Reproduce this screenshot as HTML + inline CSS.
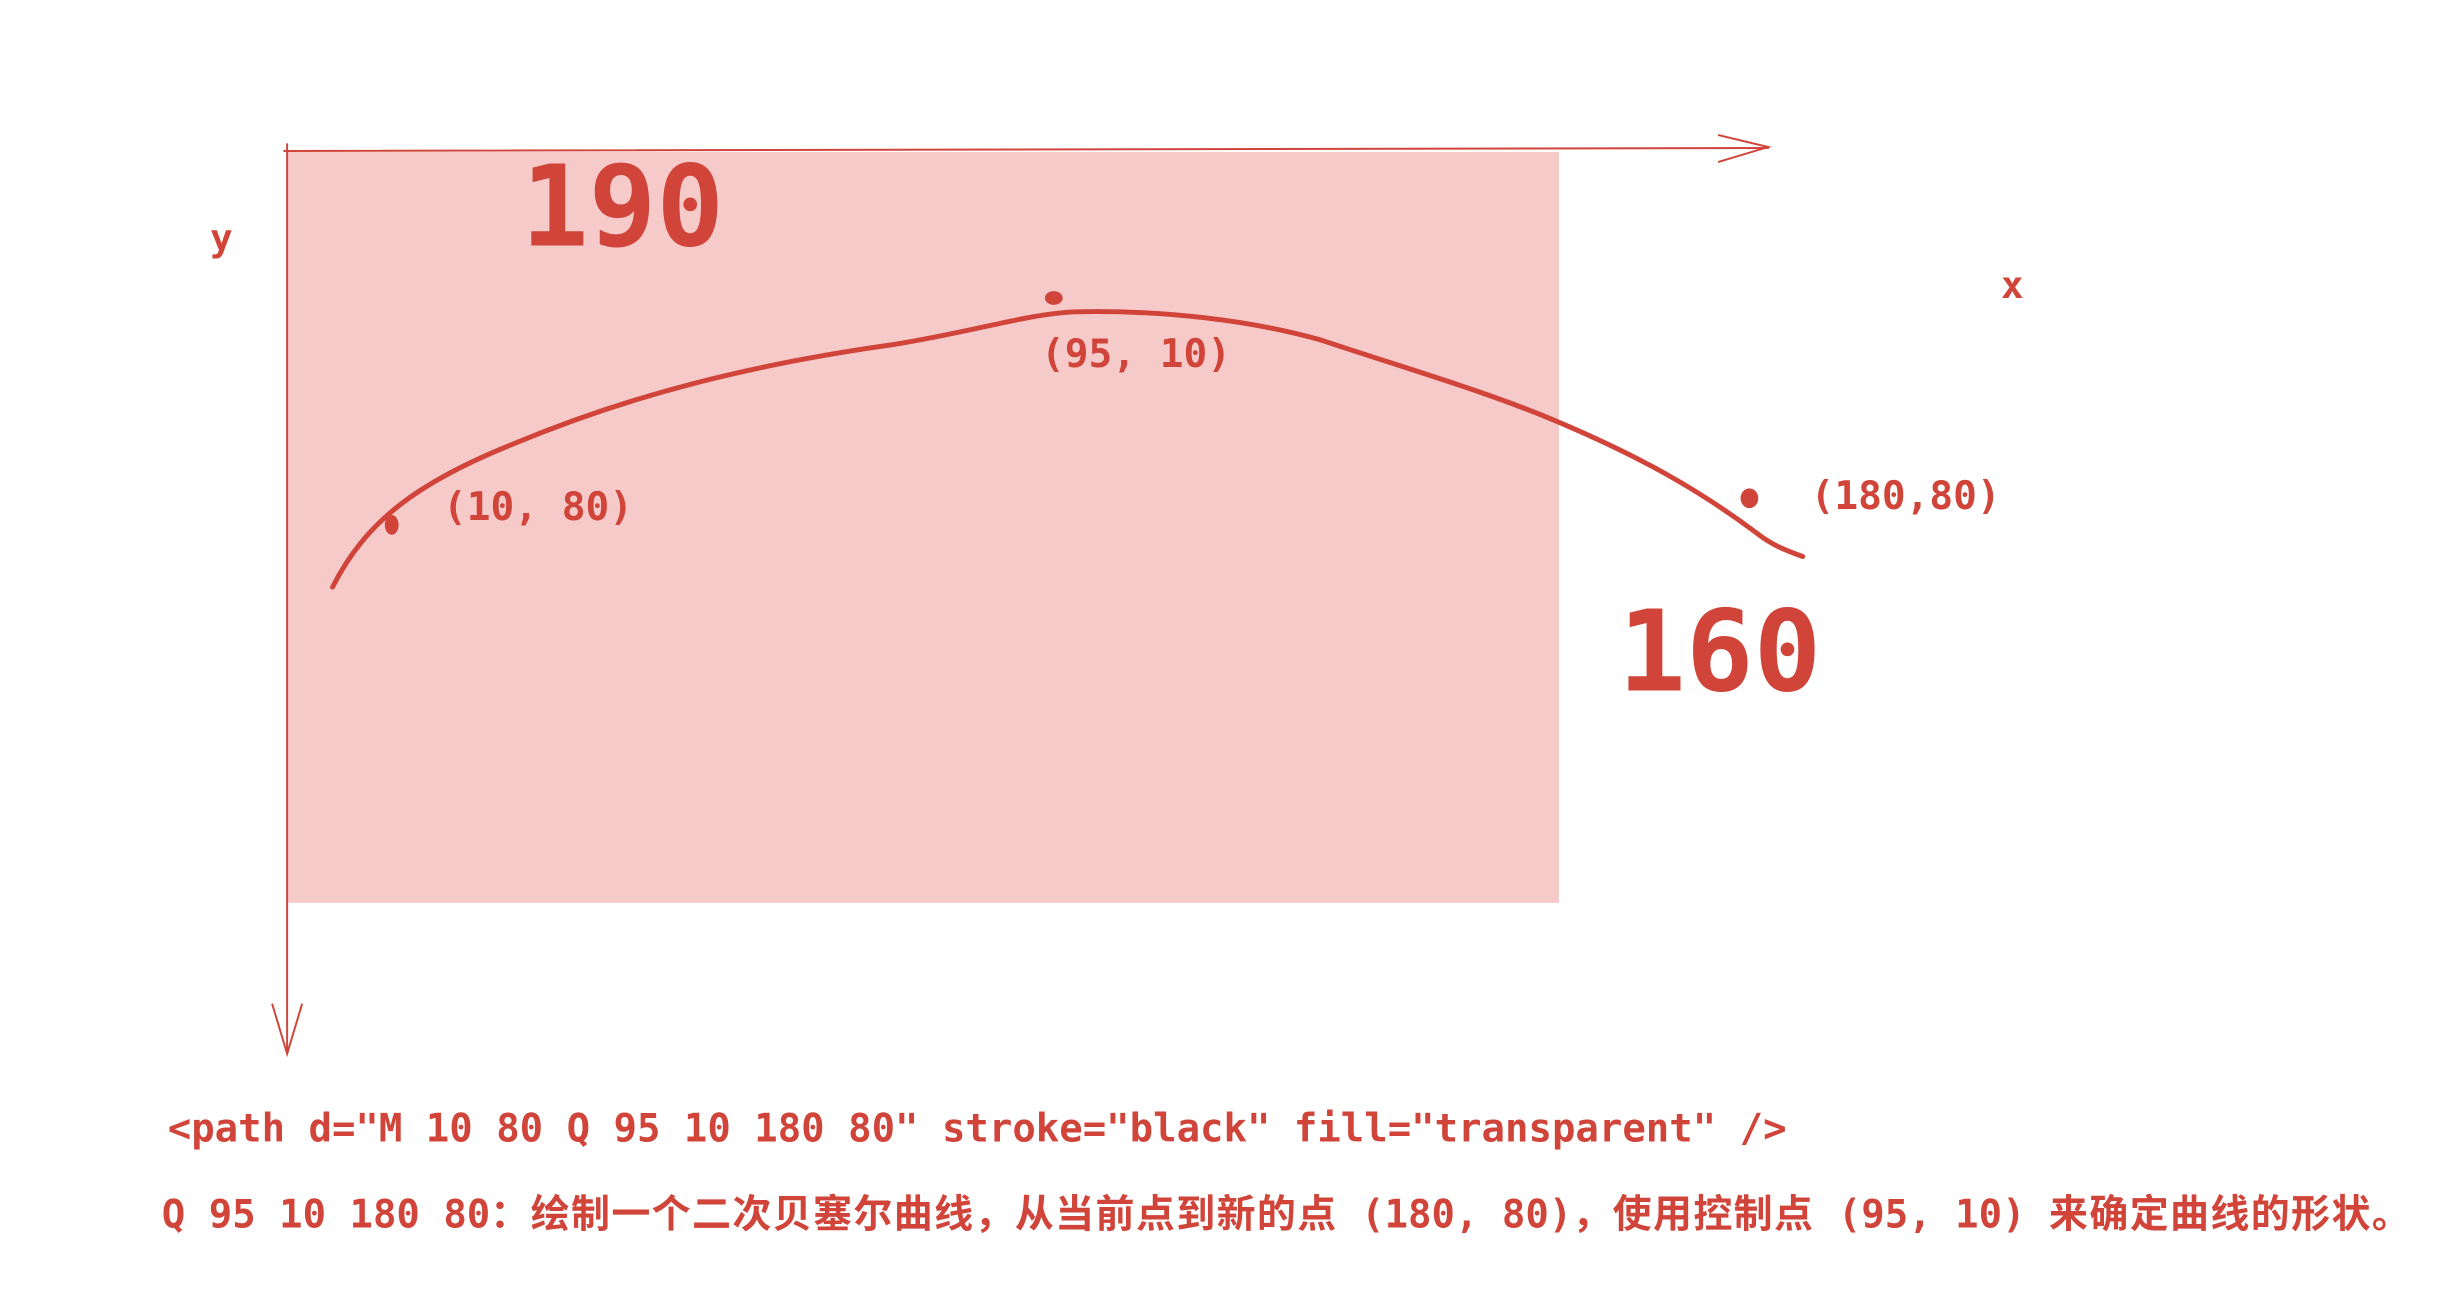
<!DOCTYPE html>
<html><head><meta charset="utf-8"><style>
html,body{margin:0;padding:0;background:#fff;width:2438px;height:1296px;overflow:hidden}
svg{display:block}
text{font-family:"DejaVu Sans Mono","Liberation Mono","Noto Sans CJK SC",monospace;fill:#d0443a;font-weight:bold}
.cj{letter-spacing:1.4px}
</style></head><body>
<svg width="2438" height="1296" viewBox="0 0 2438 1296" xmlns="http://www.w3.org/2000/svg">
<g transform="scale(0.9867)">
<rect x="291" y="154" width="1289" height="761" fill="#f7caca"/>
<g stroke="#d0443a" stroke-width="2" fill="none" stroke-linecap="round">
<path d="M288 153 L1792 150"/>
<path d="M1742 137 L1792 149 L1742 164"/>
<path d="M291 146 L291 1066"/>
<path d="M276 1018 L291 1068 L306 1018"/>
</g>
<path d="M337 595 C370 530 420 490 520 450 C640 400 760 370 900 350 C980 338 1040 318 1090 316 C1180 314 1270 325 1340 345 C1430 375 1510 398 1580 428 C1660 462 1720 495 1780 540 C1795 552 1810 558 1827 564" stroke="#d0443a" stroke-width="5" fill="none" stroke-linecap="round"/>
<ellipse cx="397" cy="532" rx="7" ry="10" fill="#d0443a"/>
<ellipse cx="1068" cy="302" rx="9" ry="7" fill="#d0443a"/>
<ellipse cx="1773" cy="505" rx="9" ry="10" fill="#d0443a"/>
<text x="528" y="249" font-size="114">190</text>
<text x="1640" y="700" font-size="114">160</text>
<text x="213" y="254" font-size="38">y</text>
<text x="2028" y="302" font-size="38">x</text>
<text x="449" y="527" font-size="40">(10, 80)</text>
<text x="1055" y="372" font-size="40">(95, 10)</text>
<text x="1835" y="516" font-size="40">(180,80)</text>
<text x="170" y="1157" font-size="39.5">&lt;path d="M 10 80 Q 95 10 180 80" stroke="black" fill="transparent" /&gt;</text>
<text x="164" y="1244" font-size="39.5">Q 95 10 180 80<tspan class="cj">：绘制一个二次贝塞尔曲线，从当前点到新的点</tspan> (180, 80)<tspan class="cj">，使用控制点</tspan> (95, 10) <tspan class="cj">来确定曲线的形状。</tspan></text>
</g>
</svg>
</body></html>
